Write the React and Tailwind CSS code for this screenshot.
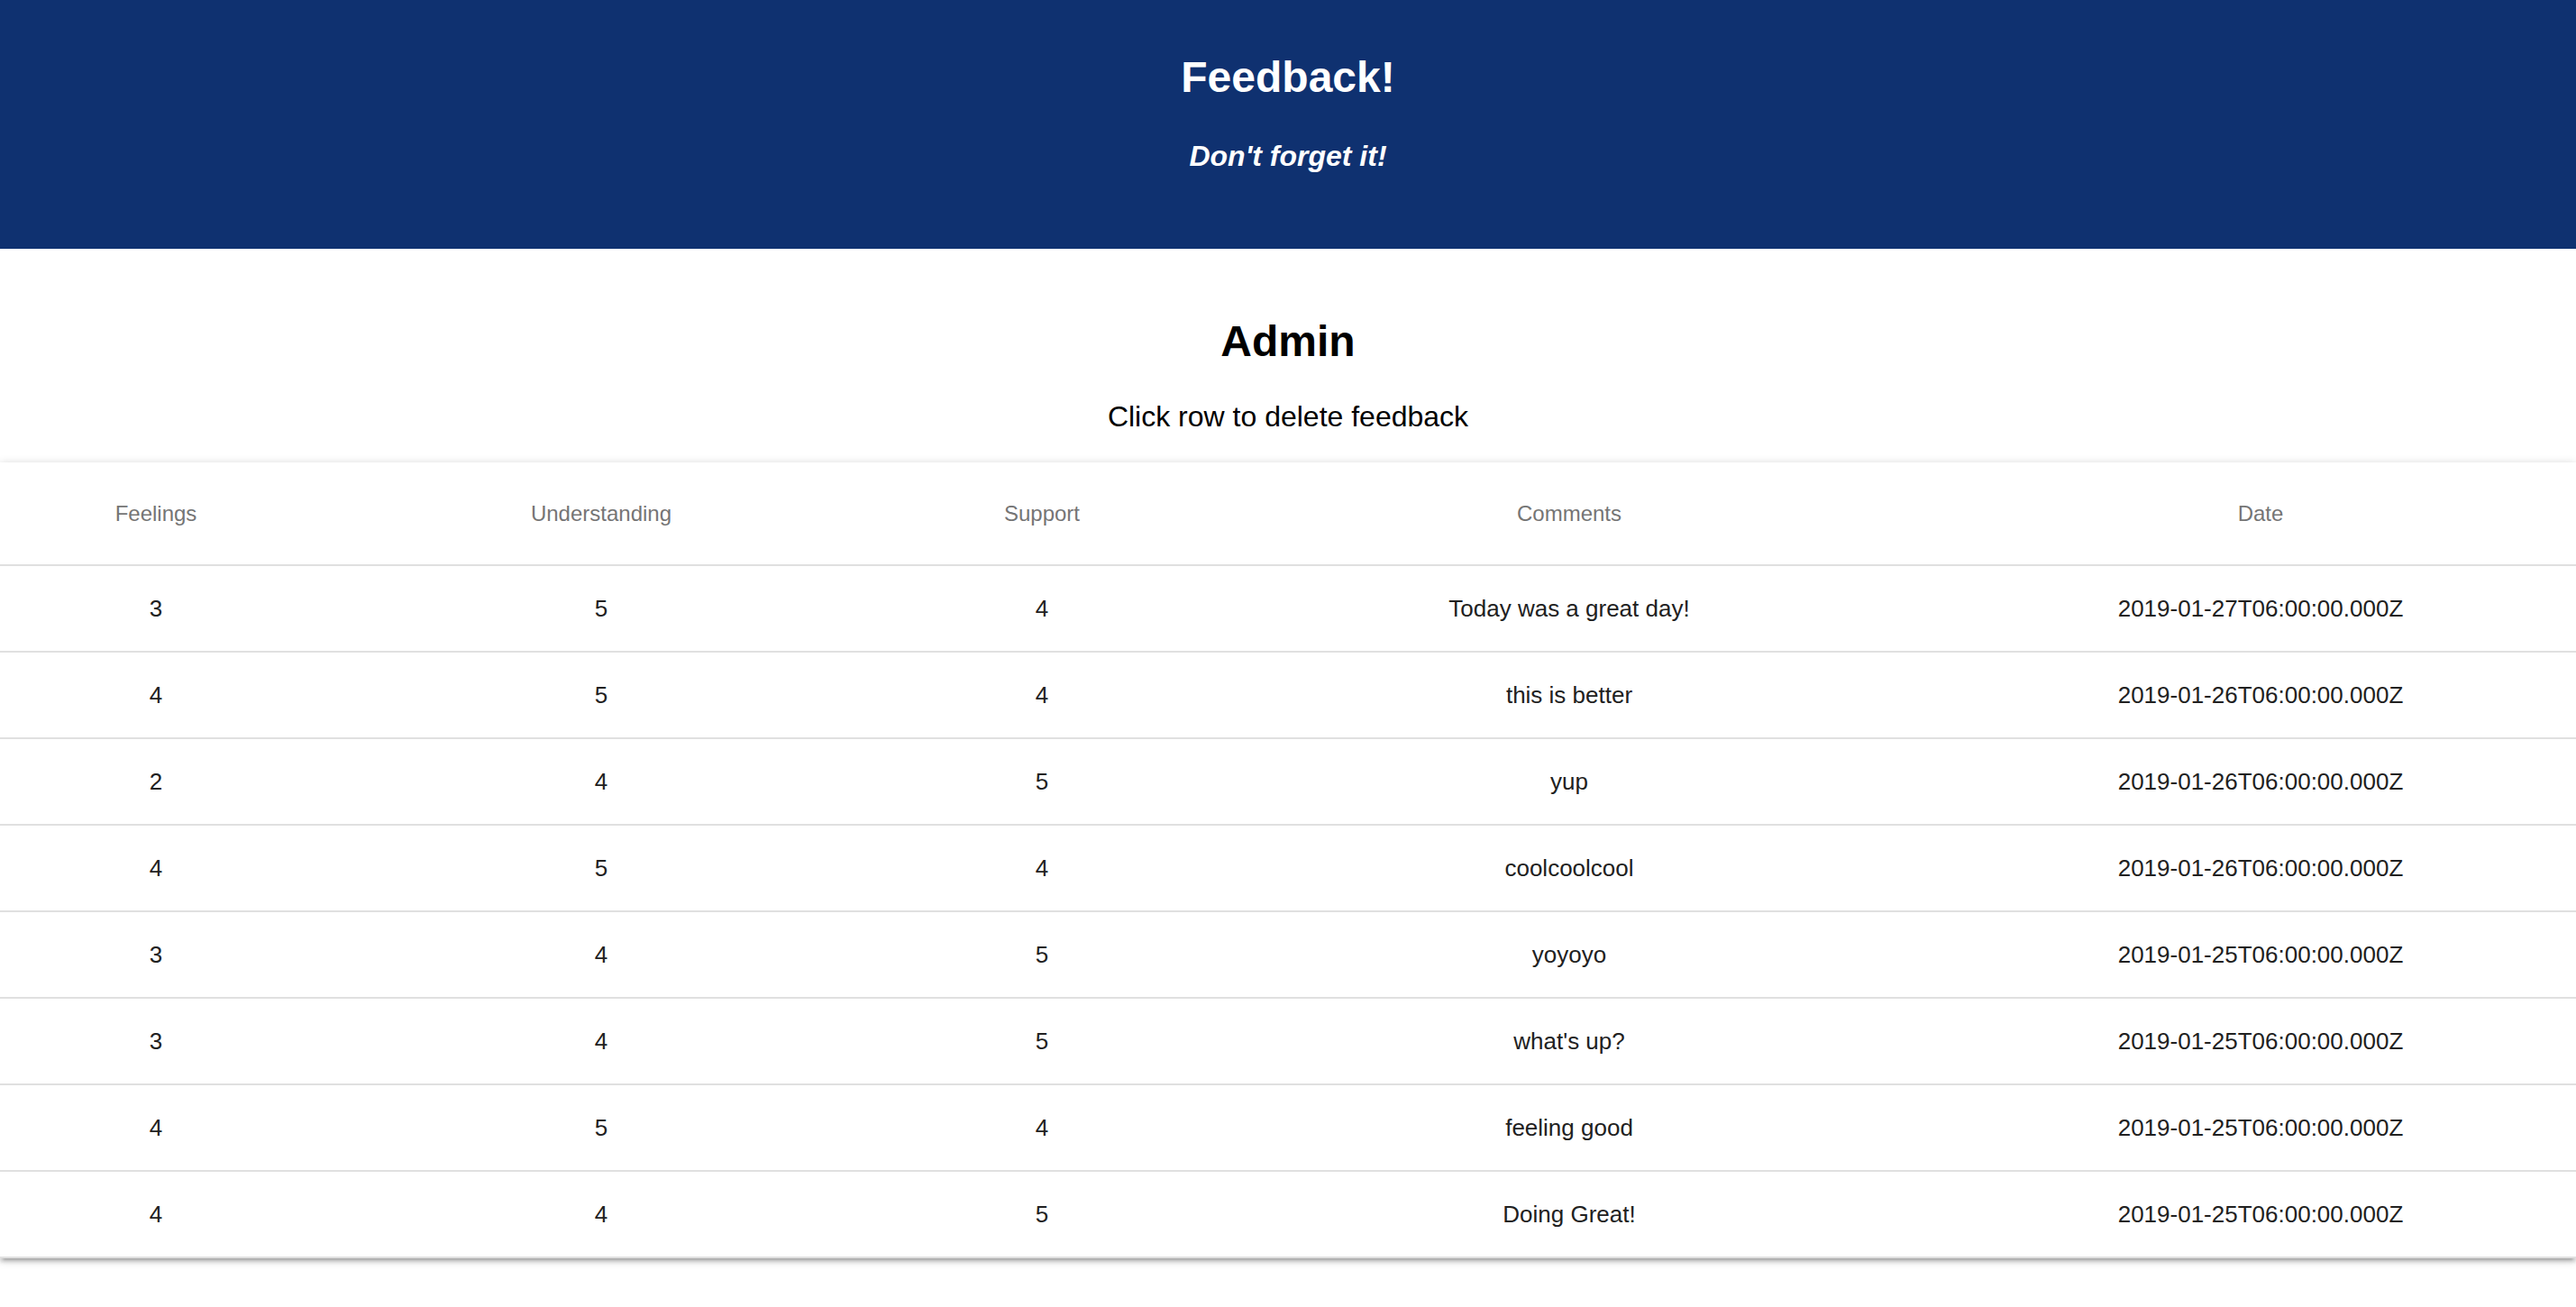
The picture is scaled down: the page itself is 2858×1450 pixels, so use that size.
import React from 'react';

const feedback = [
  { feeling: 3, understanding: 5, support: 4, comments: 'Today was a great day!', date: '2019-01-27T06:00:00.000Z' },
  { feeling: 4, understanding: 5, support: 4, comments: 'this is better', date: '2019-01-26T06:00:00.000Z' },
  { feeling: 2, understanding: 4, support: 5, comments: 'yup', date: '2019-01-26T06:00:00.000Z' },
  { feeling: 4, understanding: 5, support: 4, comments: 'coolcoolcool', date: '2019-01-26T06:00:00.000Z' },
  { feeling: 3, understanding: 4, support: 5, comments: 'yoyoyo', date: '2019-01-25T06:00:00.000Z' },
  { feeling: 3, understanding: 4, support: 5, comments: "what's up?", date: '2019-01-25T06:00:00.000Z' },
  { feeling: 4, understanding: 5, support: 4, comments: 'feeling good', date: '2019-01-25T06:00:00.000Z' },
  { feeling: 4, understanding: 4, support: 5, comments: 'Doing Great!', date: '2019-01-25T06:00:00.000Z' },
];

const cell = 'pl-12 pr-28 text-center border-b-2 border-[#e0e0e0]';
const lastCell = 'px-12 text-center border-b-2 border-[#e0e0e0]';

const App = () => {
  return (
    <div className="min-h-[1450px] bg-white font-['Liberation_Sans',Arial,sans-serif]">
      {/* Header */}
      <header className="h-[276px] bg-[#0f3170] text-white flex flex-col items-center pt-[58px]">
        <h1 className="text-[48px] leading-[56px] font-bold">Feedback!</h1>
        <h2 className="mt-[39px] text-[32px] leading-[40px] font-bold italic">Don't forget it!</h2>
      </header>

      {/* Admin */}
      <section className="flex flex-col items-center pt-[75px]">
        <h2 className="text-[48px] leading-[56px] font-bold text-black">Admin</h2>
        <p className="mt-[35px] text-[32px] leading-[40px] text-black">Click row to delete feedback</p>
      </section>

      {/* Table */}
      <div className="mt-[31px] bg-white shadow-[0_2px_10px_0_rgba(0,0,0,0.2),0_4px_4px_0_rgba(0,0,0,0.14),0_6px_2px_-4px_rgba(0,0,0,0.12)]">
        <table className="w-full table-fixed border-collapse">
          <colgroup>
            <col className="w-[410px]" />
            <col className="w-[578px]" />
            <col className="w-[400px]" />
            <col className="w-[770px]" />
            <col />
          </colgroup>
          <thead>
            <tr className="h-[114px] text-[24px] text-[#757575] font-normal">
              <th className={`${cell} font-normal`}>Feelings</th>
              <th className={`${cell} font-normal`}>Understanding</th>
              <th className={`${cell} font-normal`}>Support</th>
              <th className={`${cell} font-normal`}>Comments</th>
              <th className={`${lastCell} font-normal`}>Date</th>
            </tr>
          </thead>
          <tbody>
            {feedback.map((row, i) => (
              <tr key={i} className="h-[96px] text-[26px] text-[#212121] cursor-pointer">
                <td className={cell}>{row.feeling}</td>
                <td className={cell}>{row.understanding}</td>
                <td className={cell}>{row.support}</td>
                <td className={cell}>{row.comments}</td>
                <td className={lastCell}>{row.date}</td>
              </tr>
            ))}
          </tbody>
        </table>
      </div>
    </div>
  );
};

export default App;
